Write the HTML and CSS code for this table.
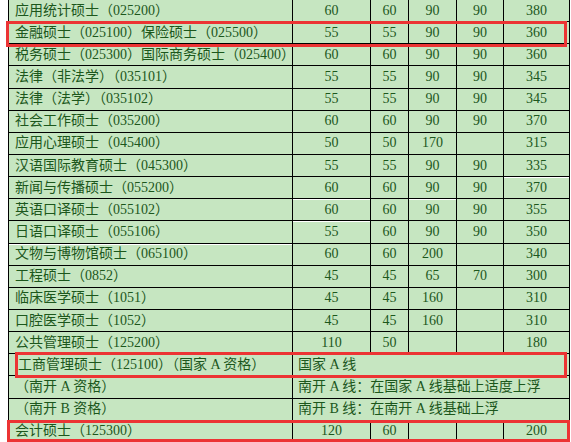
FILE: index.html
```html
<!DOCTYPE html>
<html lang="zh-CN">
<head>
<meta charset="utf-8">
<title>复试分数线</title>
<link rel="stylesheet" href="styles.css">
</head>
<body>
<div class="sheet">
<table class="scores">
<colgroup>
<col class="c-name"><col class="c-a"><col class="c-b"><col class="c-c"><col class="c-d"><col class="c-e">
</colgroup>
<tbody>
<tr><td class="name">应用统计硕士（025200）</td><td>60</td><td>60</td><td>90</td><td>90</td><td>380</td></tr>
<tr><td class="name">金融硕士（025100）保险硕士（025500）</td><td>55</td><td>55</td><td>90</td><td>90</td><td>360</td></tr>
<tr><td class="name wt">税务硕士（025300）国际商务硕士（025400）</td><td>60</td><td>60</td><td>90</td><td>90</td><td>360</td></tr>
<tr><td class="name">法律（非法学）（035101）</td><td>55</td><td>55</td><td>90</td><td>90</td><td>345</td></tr>
<tr><td class="name">法律（法学）（035102）</td><td>55</td><td>55</td><td>90</td><td>90</td><td>345</td></tr>
<tr><td class="name">社会工作硕士（035200）</td><td>60</td><td>60</td><td>90</td><td>90</td><td>370</td></tr>
<tr><td class="name">应用心理硕士（045400）</td><td>50</td><td>50</td><td>170</td><td></td><td>315</td></tr>
<tr><td class="name">汉语国际教育硕士（045300）</td><td>55</td><td>55</td><td>90</td><td>90</td><td>335</td></tr>
<tr><td class="name">新闻与传播硕士（055200）</td><td>60</td><td>60</td><td>90</td><td>90</td><td class="wt">370</td></tr>
<tr><td class="name">英语口译硕士（055102）</td><td class="wt">60</td><td>60</td><td class="wt">90</td><td>90</td><td>355</td></tr>
<tr><td class="name">日语口译硕士（055106）</td><td class="wt">55</td><td>60</td><td>90</td><td>90</td><td>350</td></tr>
<tr><td class="name wt">文物与博物馆硕士（065100）</td><td>60</td><td>60</td><td>200</td><td></td><td>340</td></tr>
<tr><td class="name">工程硕士（0852）</td><td>45</td><td>45</td><td>65</td><td>70</td><td>300</td></tr>
<tr><td class="name">临床医学硕士（1051）</td><td>45</td><td>45</td><td>160</td><td></td><td>310</td></tr>
<tr><td class="name">口腔医学硕士（1052）</td><td>45</td><td>45</td><td>160</td><td></td><td>310</td></tr>
<tr><td class="name">公共管理硕士（125200）</td><td>110</td><td>50</td><td></td><td></td><td>180</td></tr>
<tr><td class="name indent">工商管理硕士（125100）（国家 A 资格）</td><td class="note" colspan="5">国家 A 线</td></tr>
<tr><td class="name">（南开 A 资格）</td><td class="note" colspan="5">南开 A 线：在国家 A 线基础上适度上浮</td></tr>
<tr><td class="name">（南开 B 资格）</td><td class="note" colspan="5">南开 B 线：在南开 A 线基础上浮</td></tr>
<tr><td class="name">会计硕士（125300）</td><td>120</td><td>60</td><td></td><td></td><td>200</td></tr>
</tbody>
</table>
<div class="mark mark-finance"></div>
<div class="mark mark-mba"></div>
<div class="mark mark-acc"></div>
</div>
</body>
</html>
```

FILE: styles.css
```css
html, body {
  margin: 0;
  padding: 0;
  background: #ffffff;
  overflow: hidden;
}

body {
  width: 571px;
  height: 442px;
}

.sheet {
  position: relative;
  width: 571px;
  height: 442px;
  overflow: hidden;
}

.scores {
  margin: -1px 0 0 8px;
  width: 561px;
  table-layout: fixed;
  border-collapse: collapse;
  background: #c6e6c1;
  font-family: "Liberation Serif", "Noto Sans CJK SC", serif;
  font-size: 14px;
  color: #1c571c;
}

.c-name { width: 284px; }
.c-a { width: 78px; }
.c-b { width: 38px; }
.c-c { width: 48px; }
.c-d { width: 47px; }
.c-e { width: 66px; }

.scores tr {
  height: 22.15px;
}

.scores td {
  border: 1px solid #000;
  padding: 0;
  text-align: center;
  vertical-align: middle;
  white-space: nowrap;
  line-height: 16px;
  overflow: visible;
}

.scores td.name {
  text-align: left;
  padding-left: 6px;
}

.scores td.indent {
  padding-left: 9px;
}

.scores td.note {
  text-align: left;
  padding-left: 5px;
}

.scores td.wt {
  box-shadow: inset 0 1px 0 #ffffff;
}

.mark {
  position: absolute;
  border: 3px solid #ec3434;
  box-sizing: border-box;
}

.mark-finance {
  left: 6px;
  top: 21px;
  width: 561px;
  height: 26px;
}

.mark-mba {
  left: 15px;
  top: 352px;
  width: 552px;
  height: 26px;
}

.mark-acc {
  left: 7px;
  top: 420px;
  width: 563px;
  height: 22px;
}
```
